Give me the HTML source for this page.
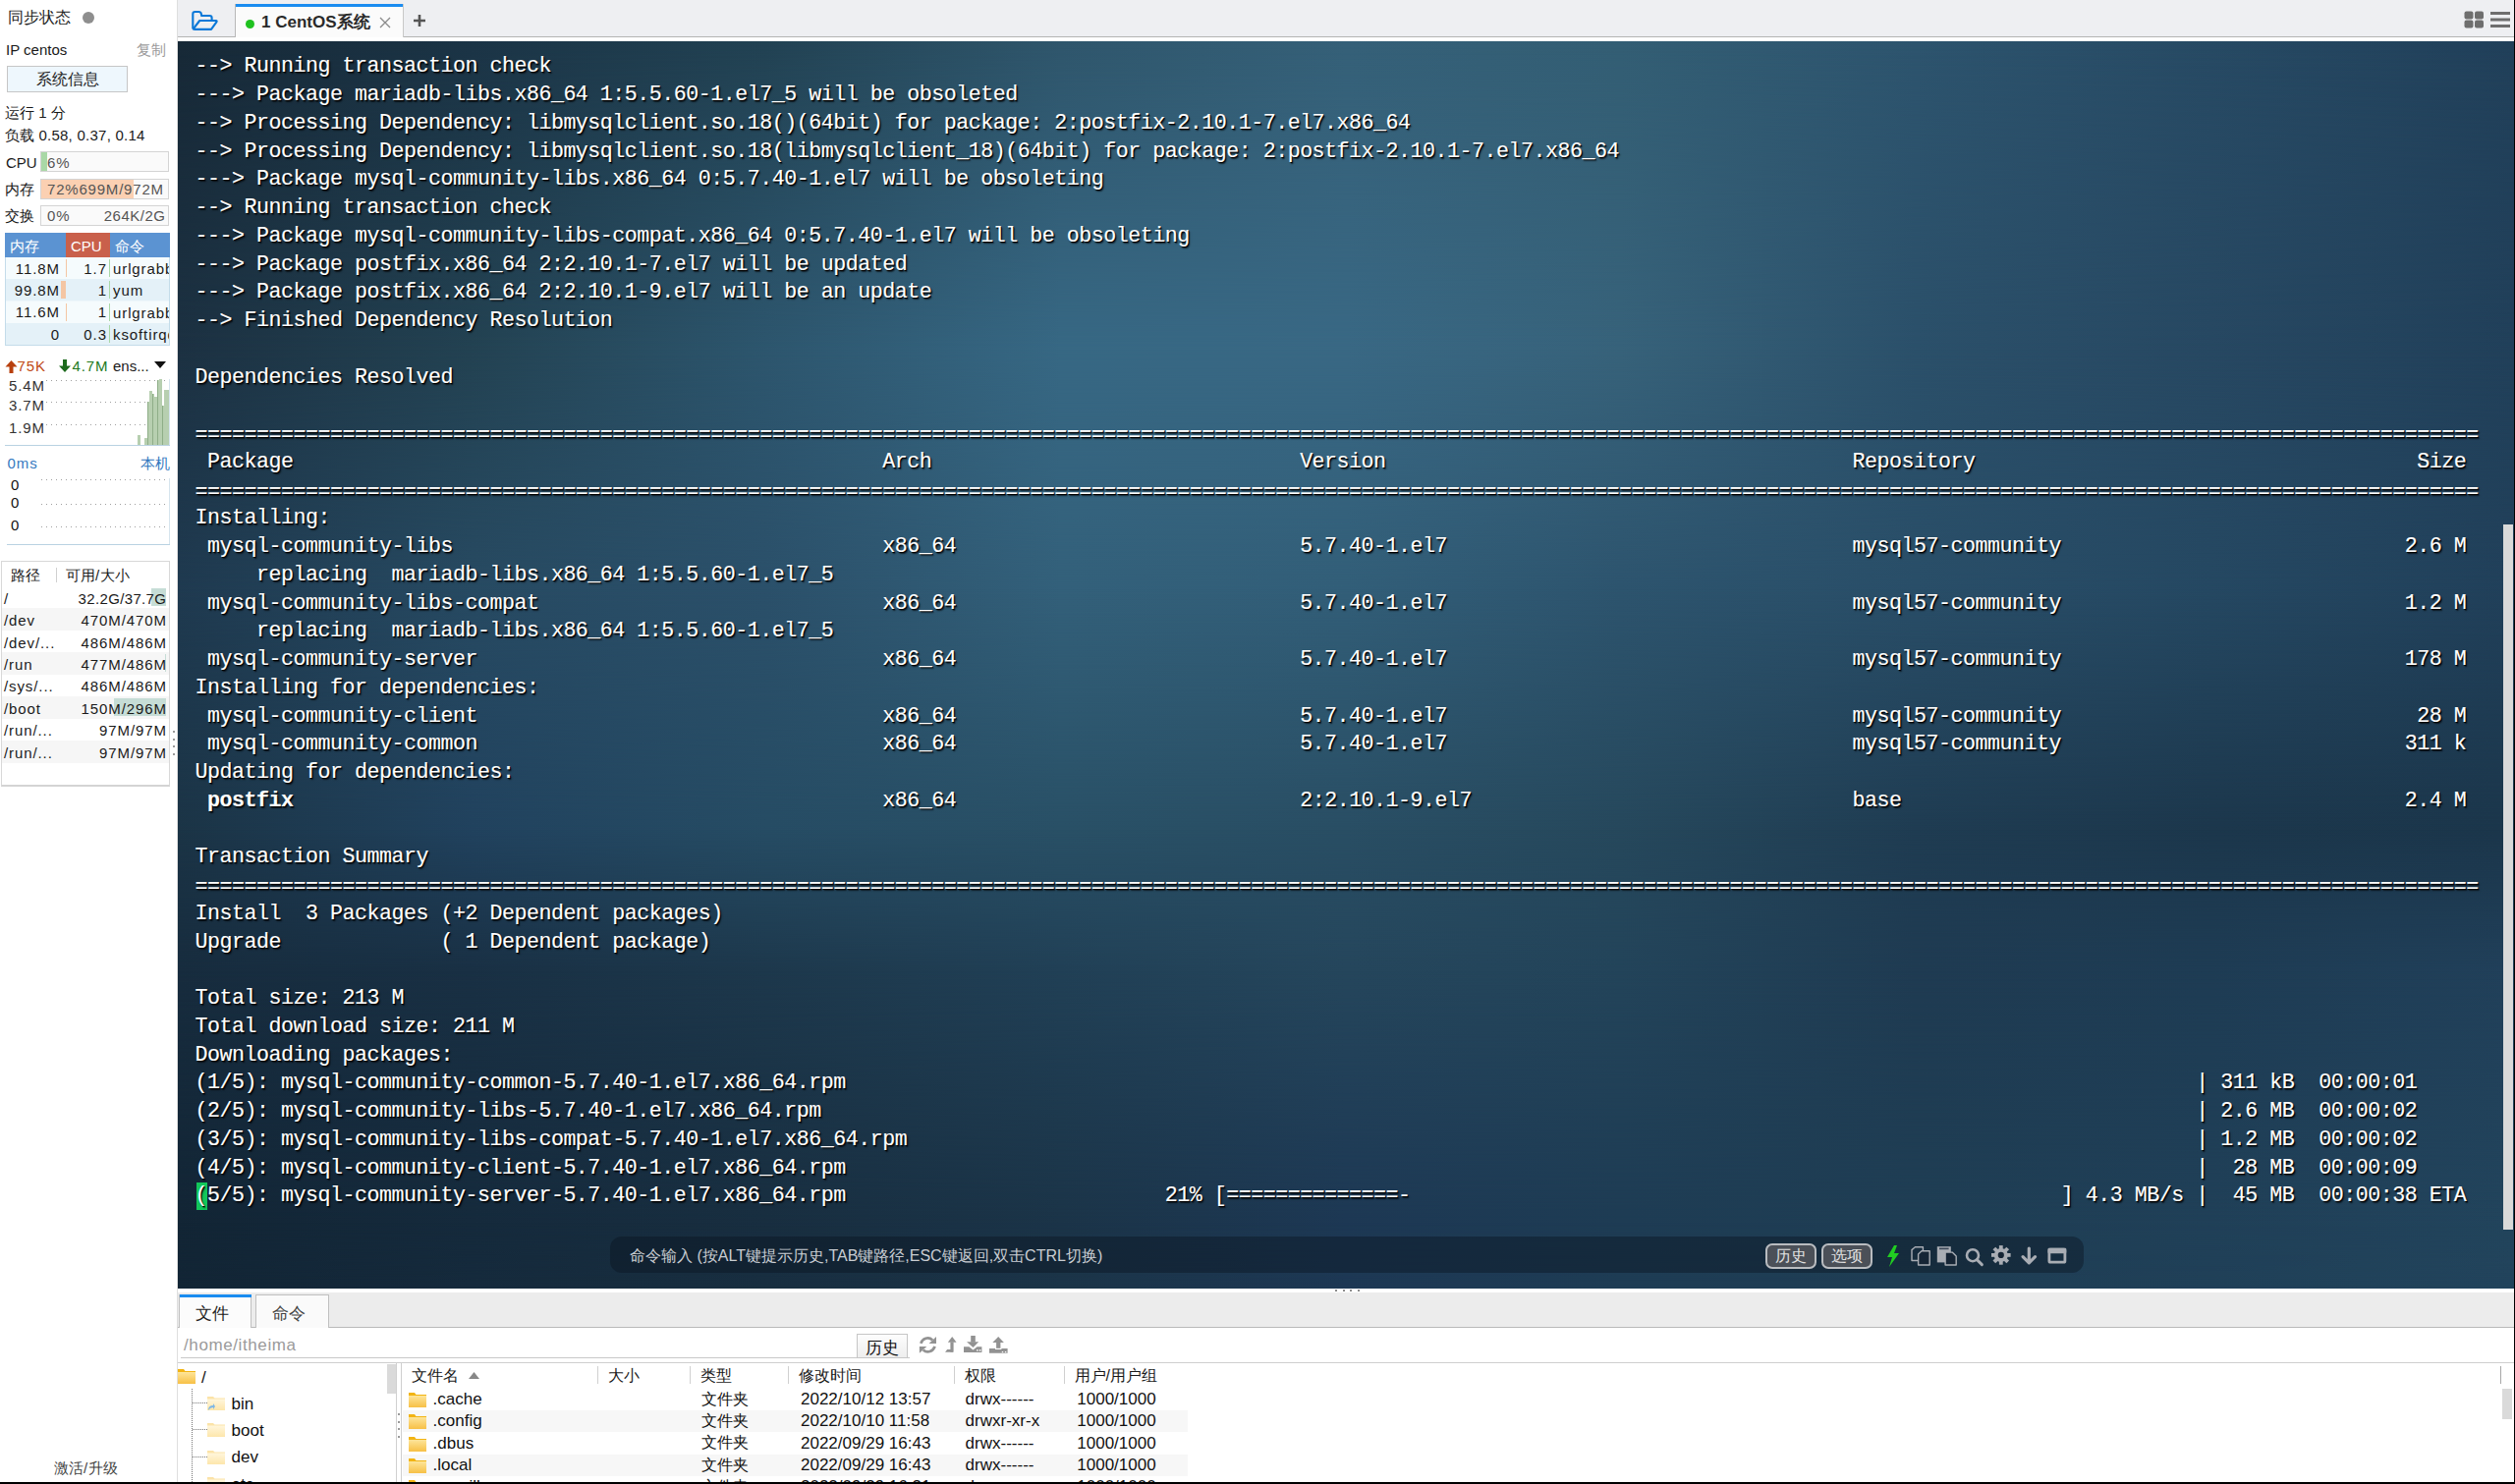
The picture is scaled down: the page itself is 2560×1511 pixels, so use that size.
<!DOCTYPE html>
<html><head><meta charset="utf-8">
<style>
*{margin:0;padding:0;box-sizing:border-box}
html,body{width:2560px;height:1511px;overflow:hidden;background:#fff;position:relative;font-family:"Liberation Sans",sans-serif;color:#1a1a1a}
.a{position:absolute}
.t{white-space:pre}
.cj{display:inline-block;width:1em;text-align:center;letter-spacing:0!important}
.sb .t{letter-spacing:.9px}
.sb .t[style*="text-align:right"]{margin-right:-.9px}
.bp .t{letter-spacing:.6px}
#side{left:0;top:0;width:180px;height:1511px;background:#fff}
#tabbar{left:181px;top:0;width:2378px;height:38px;background:#eeeff2;border-bottom:1px solid #b4b4b4}
#gap1{left:181px;top:38px;width:2378px;height:4px;background:#fff}
#term{left:181px;top:42px;width:2378px;height:1270px;overflow:hidden;background:#1e3040}
#term pre{position:absolute;left:17.5px;top:12.3px;font-family:"Liberation Mono",monospace;font-size:21.67px;letter-spacing:-0.5px;line-height:28.75px;color:#fff;-webkit-text-stroke:0.15px #fff;
 text-shadow:1px 1px 0 #000,1.5px 1.5px 1.5px rgba(0,0,0,.7);white-space:pre}
#term pre b{font-weight:bold}
.cur{background:#11c45a}
#bot{left:181px;top:1312px;width:2378px;height:197px;background:#fff}
#rb{left:2559px;top:0;width:1px;height:1511px;background:#000}
#bb{left:0;top:1509px;width:2560px;height:2px;background:#000}
</style></head><body>
<div id="side" class="a"></div>
<div class="a" style="left:180px;top:0;width:1px;height:1511px;background:#dedede"></div>
<div class="sb"><div class="a t" style="left:8px;top:10.46px;font-size:16px;line-height:16px;color:#222;"><span class="cj">同</span><span class="cj">步</span><span class="cj">状</span><span class="cj">态</span></div>
<div class="a" style="left:84px;top:12px;width:12px;height:12px;background:#8e8e8e;border-radius:50%"></div>
<div class="a t" style="left:6px;top:42.90px;font-size:15px;line-height:15px;color:#1a1a1a;letter-spacing:0">IP centos</div>
<div class="a t" style="left:139px;top:43.30px;font-size:15px;line-height:15px;color:#9c9c9c;"><span class="cj">复</span><span class="cj">制</span></div>
<div class="a" style="left:7px;top:67px;width:123px;height:27px;background:#eef7fd;border:1px solid #c6c6c6"></div>
<div class="a t" style="left:7px;width:123px;top:73.46px;font-size:16px;line-height:16px;color:#222;text-align:center;"><span class="cj">系</span><span class="cj">统</span><span class="cj">信</span><span class="cj">息</span></div>
<div class="a t" style="left:5px;top:107.30px;font-size:15px;line-height:15px;color:#1a1a1a;letter-spacing:0"><span class="cj">运</span><span class="cj">行</span> 1 <span class="cj">分</span></div>
<div class="a t" style="left:5px;top:130.30px;font-size:15px;line-height:15px;color:#1a1a1a;letter-spacing:.25px"><span class="cj">负</span><span class="cj">载</span> 0.58, 0.37, 0.14</div>
<div class="a t" style="left:6px;top:157.80px;font-size:15px;line-height:15px;color:#1a1a1a;letter-spacing:0">CPU</div>
<div class="a" style="left:41px;top:154px;width:131px;height:21px;background:#fafafa;border:1px solid #d4d4d4"></div>
<div class="a" style="left:42px;top:155px;width:6px;height:19px;background:#a9d8a6;"></div>
<div class="a t" style="left:48px;top:157.80px;font-size:15px;line-height:15px;color:#555;">6%</div>
<div class="a t" style="left:5px;top:184.80px;font-size:15px;line-height:15px;color:#1a1a1a;"><span class="cj">内</span><span class="cj">存</span></div>
<div class="a" style="left:41px;top:182px;width:131px;height:21px;background:#fafafa;border:1px solid #d4d4d4"></div>
<div class="a" style="left:42px;top:183px;width:94px;height:19px;background:#fbd0b2;"></div>
<div class="a t" style="left:48px;top:185.30px;font-size:15px;line-height:15px;color:#555;letter-spacing:.8px">72%699M/972M</div>
<div class="a t" style="left:5px;top:211.80px;font-size:15px;line-height:15px;color:#1a1a1a;"><span class="cj">交</span><span class="cj">换</span></div>
<div class="a" style="left:41px;top:209px;width:131px;height:21px;background:#fafafa;border:1px solid #d4d4d4"></div>
<div class="a t" style="left:48px;top:212.30px;font-size:15px;line-height:15px;color:#555;">0%</div>
<div class="a t" style="right:2392px;top:212.30px;font-size:15px;line-height:15px;color:#555;text-align:right;letter-spacing:.5px;margin-right:-.5px">264K/2G</div>
<div class="a" style="left:5px;top:237px;width:168px;height:115px;background:#eef6fa;border:1px solid #c4dcea;border-top:none"></div>
<div class="a" style="left:5px;top:237px;width:168px;height:25px;background:#5b93d2;"></div>
<div class="a" style="left:67px;top:237px;width:45px;height:25px;background:#c9604b;"></div>
<div class="a t" style="left:10px;top:243.30px;font-size:15px;line-height:15px;color:#fff;"><span class="cj">内</span><span class="cj">存</span></div>
<div class="a t" style="left:72px;top:243.30px;font-size:15px;line-height:15px;color:#fff;letter-spacing:0">CPU</div>
<div class="a t" style="left:117px;top:243.30px;font-size:15px;line-height:15px;color:#fff;"><span class="cj">命</span><span class="cj">令</span></div>
<div class="a" style="left:6px;top:262px;width:166px;height:22px;background:#f5fbfd;"></div>
<div class="a t" style="right:2500px;top:265.80px;font-size:15px;line-height:15px;color:#1a1a1a;text-align:right;">11.8M</div>
<div class="a" style="left:66.5px;top:264px;width:0.5px;height:18px;background:#f4c6a4;"></div>
<div class="a" style="left:111px;top:264px;width:1px;height:18px;background:#a8d8a6;"></div>
<div class="a t" style="right:2452px;top:265.80px;font-size:15px;line-height:15px;color:#1a1a1a;text-align:right;">1.7</div>
<div class="a" style="left:115px;top:262px;width:57px;height:22px;overflow:hidden"><div class="a t" style="left:0px;top:3.80px;font-size:15px;line-height:15px;color:#1a1a1a;">urlgrabber</div></div>
<div class="a" style="left:6px;top:284px;width:166px;height:22px;background:#e4f1f8;"></div>
<div class="a t" style="right:2500px;top:288.10px;font-size:15px;line-height:15px;color:#1a1a1a;text-align:right;">99.8M</div>
<div class="a" style="left:62px;top:286px;width:5px;height:18px;background:#f4c6a4;"></div>
<div class="a" style="left:111px;top:286px;width:1px;height:18px;background:#a8d8a6;"></div>
<div class="a t" style="right:2452px;top:288.10px;font-size:15px;line-height:15px;color:#1a1a1a;text-align:right;">1</div>
<div class="a" style="left:115px;top:284px;width:57px;height:22px;overflow:hidden"><div class="a t" style="left:0px;top:3.80px;font-size:15px;line-height:15px;color:#1a1a1a;">yum</div></div>
<div class="a" style="left:6px;top:307px;width:166px;height:22px;background:#f5fbfd;"></div>
<div class="a t" style="right:2500px;top:310.40px;font-size:15px;line-height:15px;color:#1a1a1a;text-align:right;">11.6M</div>
<div class="a" style="left:66.5px;top:309px;width:0.5px;height:18px;background:#f4c6a4;"></div>
<div class="a" style="left:111px;top:309px;width:1px;height:18px;background:#a8d8a6;"></div>
<div class="a t" style="right:2452px;top:310.40px;font-size:15px;line-height:15px;color:#1a1a1a;text-align:right;">1</div>
<div class="a" style="left:115px;top:307px;width:57px;height:22px;overflow:hidden"><div class="a t" style="left:0px;top:3.80px;font-size:15px;line-height:15px;color:#1a1a1a;">urlgrabber</div></div>
<div class="a" style="left:6px;top:329px;width:166px;height:22px;background:#e4f1f8;"></div>
<div class="a t" style="right:2500px;top:332.70px;font-size:15px;line-height:15px;color:#1a1a1a;text-align:right;">0</div>
<div class="a" style="left:111px;top:331px;width:1px;height:18px;background:#a8d8a6;"></div>
<div class="a t" style="right:2452px;top:332.70px;font-size:15px;line-height:15px;color:#1a1a1a;text-align:right;">0.3</div>
<div class="a" style="left:115px;top:329px;width:57px;height:22px;overflow:hidden"><div class="a t" style="left:0px;top:3.80px;font-size:15px;line-height:15px;color:#1a1a1a;">ksoftirqd</div></div>
<svg class="a" style="left:5px;top:367px" width="13" height="13" viewBox="0 0 13 13"><path d="M6.5 0 L12.5 6.5 L8.5 6.5 L8.5 13 L4.5 13 L4.5 6.5 L0.5 6.5 Z" fill="#b8400e"/></svg>
<div class="a t" style="left:17.5px;top:365.30px;font-size:15px;line-height:15px;color:#c04a14;">75K</div>
<svg class="a" style="left:60px;top:366px" width="12" height="13" viewBox="0 0 12 13"><path d="M6 13 L12 6.5 L8 6.5 L8 0 L4 0 L4 6.5 L0 6.5 Z" fill="#1d6a1d"/></svg>
<div class="a t" style="left:73.5px;top:365.30px;font-size:15px;line-height:15px;color:#237a23;">4.7M</div>
<div class="a t" style="left:115px;top:365.30px;font-size:15px;line-height:15px;color:#1a1a1a;letter-spacing:0">ens...</div>
<svg class="a" style="left:157px;top:368px" width="12" height="8" viewBox="0 0 12 8"><path d="M0 0 L12 0 L6 7 Z" fill="#111"/></svg>
<div class="a" style="left:5px;top:453px;width:168px;height:1px;background:#b9d2e2;"></div>
<div class="a" style="left:172px;top:386px;width:1px;height:67px;background:#d6e4ee;"></div>
<div class="a" style="left:47px;top:387px;width:125px;height:1px;background:repeating-linear-gradient(90deg,#a0a0a0 0 1px,transparent 1px 5px);"></div>
<div class="a" style="left:47px;top:409px;width:125px;height:1px;background:repeating-linear-gradient(90deg,#a0a0a0 0 1px,transparent 1px 5px);"></div>
<div class="a" style="left:47px;top:432px;width:125px;height:1px;background:repeating-linear-gradient(90deg,#a0a0a0 0 1px,transparent 1px 5px);"></div>
<div class="a t" style="left:9px;top:385.30px;font-size:15px;line-height:15px;color:#333;">5.4M</div>
<div class="a t" style="left:9px;top:405.30px;font-size:15px;line-height:15px;color:#333;">3.7M</div>
<div class="a t" style="left:9px;top:427.90px;font-size:15px;line-height:15px;color:#333;">1.9M</div>
<svg class="a" style="left:138px;top:380px" width="36" height="74"><rect x="2" y="63" width="3" height="10" fill="#b7cfb0"/><rect x="9" y="66" width="3" height="7" fill="#b7cfb0"/><rect x="12" y="29" width="2" height="44" fill="#b7cfb0"/><rect x="14" y="18" width="3" height="55" fill="#b7cfb0"/><rect x="17" y="21" width="2" height="52" fill="#b7cfb0"/><rect x="19" y="24" width="3" height="49" fill="#b7cfb0"/><rect x="22" y="7" width="2" height="66" fill="#b7cfb0"/><rect x="24" y="6" width="3" height="67" fill="#b7cfb0"/><rect x="27" y="33" width="2" height="40" fill="#b7cfb0"/><rect x="29" y="17" width="5" height="56" fill="#b7cfb0"/><rect x="12" y="29" width="1" height="44" fill="#8fae88"/><rect x="17" y="21" width="1" height="52" fill="#8fae88"/><rect x="22" y="7" width="1" height="66" fill="#8fae88"/><rect x="27" y="33" width="1" height="40" fill="#8fae88"/></svg>
<div class="a t" style="left:7.5px;top:464.30px;font-size:15px;line-height:15px;color:#3579c0;">0ms</div>
<div class="a t" style="right:2388px;top:464.30px;font-size:15px;line-height:15px;color:#3579c0;text-align:right;"><span class="cj">本</span><span class="cj">机</span></div>
<div class="a" style="left:7px;top:554px;width:166px;height:1px;background:#b9d2e2;"></div>
<div class="a" style="left:172px;top:487px;width:1px;height:67px;background:#d6e4ee;"></div>
<div class="a" style="left:42px;top:488px;width:128px;height:1px;background:repeating-linear-gradient(90deg,#a0a0a0 0 1px,transparent 1px 5px);"></div>
<div class="a" style="left:42px;top:513px;width:128px;height:1px;background:repeating-linear-gradient(90deg,#a0a0a0 0 1px,transparent 1px 5px);"></div>
<div class="a" style="left:42px;top:536px;width:128px;height:1px;background:repeating-linear-gradient(90deg,#a0a0a0 0 1px,transparent 1px 5px);"></div>
<div class="a t" style="left:11px;top:485.90px;font-size:15px;line-height:15px;color:#111;">0</div>
<div class="a t" style="left:11px;top:504.30px;font-size:15px;line-height:15px;color:#111;">0</div>
<div class="a t" style="left:11px;top:527.30px;font-size:15px;line-height:15px;color:#111;">0</div>
<div class="a" style="left:1px;top:571px;width:172px;height:230px;background:#fff;border:1px solid #d8d8d8;border-bottom:2px solid #d4d4d4"></div>
<div class="a t" style="left:10.7px;top:578.30px;font-size:15px;line-height:15px;color:#1a1a1a;"><span class="cj">路</span><span class="cj">径</span></div>
<div class="a" style="left:57px;top:578px;width:1px;height:15px;background:#d0d0d0;"></div>
<div class="a t" style="left:67px;top:578.30px;font-size:15px;line-height:15px;color:#1a1a1a;"><span class="cj">可</span><span class="cj">用</span>/<span class="cj">大</span><span class="cj">小</span></div>
<div class="a" style="left:154px;top:599px;width:15px;height:18px;background:#c6ddd6;"></div>
<div class="a t" style="left:4px;top:601.70px;font-size:15px;line-height:15px;color:#1a1a1a;">/</div>
<div class="a t" style="right:2391px;top:601.70px;font-size:15px;line-height:15px;color:#1a1a1a;text-align:right;letter-spacing:.36px;margin-right:-.36px">32.2G/37.7G</div>
<div class="a" style="left:2px;top:619px;width:170px;height:23px;background:#f6f6f6;"></div>
<div class="a t" style="left:4px;top:624.10px;font-size:15px;line-height:15px;color:#1a1a1a;">/dev</div>
<div class="a t" style="right:2391px;top:624.10px;font-size:15px;line-height:15px;color:#1a1a1a;text-align:right;">470M/470M</div>
<div class="a t" style="left:4px;top:646.50px;font-size:15px;line-height:15px;color:#1a1a1a;">/dev/...</div>
<div class="a t" style="right:2391px;top:646.50px;font-size:15px;line-height:15px;color:#1a1a1a;text-align:right;">486M/486M</div>
<div class="a" style="left:2px;top:664px;width:170px;height:23px;background:#f6f6f6;"></div>
<div class="a" style="left:168px;top:666px;width:1px;height:18px;background:#c6ddd6;"></div>
<div class="a t" style="left:4px;top:668.90px;font-size:15px;line-height:15px;color:#1a1a1a;">/run</div>
<div class="a t" style="right:2391px;top:668.90px;font-size:15px;line-height:15px;color:#1a1a1a;text-align:right;">477M/486M</div>
<div class="a t" style="left:4px;top:691.30px;font-size:15px;line-height:15px;color:#1a1a1a;">/sys/...</div>
<div class="a t" style="right:2391px;top:691.30px;font-size:15px;line-height:15px;color:#1a1a1a;text-align:right;">486M/486M</div>
<div class="a" style="left:2px;top:709px;width:170px;height:23px;background:#f6f6f6;"></div>
<div class="a" style="left:115.6px;top:711px;width:53.400000000000006px;height:18px;background:#c6ddd6;"></div>
<div class="a t" style="left:4px;top:713.70px;font-size:15px;line-height:15px;color:#1a1a1a;">/boot</div>
<div class="a t" style="right:2391px;top:713.70px;font-size:15px;line-height:15px;color:#1a1a1a;text-align:right;">150M/296M</div>
<div class="a t" style="left:4px;top:736.10px;font-size:15px;line-height:15px;color:#1a1a1a;">/run/...</div>
<div class="a t" style="right:2391px;top:736.10px;font-size:15px;line-height:15px;color:#1a1a1a;text-align:right;">97M/97M</div>
<div class="a" style="left:2px;top:754px;width:170px;height:23px;background:#f6f6f6;"></div>
<div class="a t" style="left:4px;top:758.50px;font-size:15px;line-height:15px;color:#1a1a1a;">/run/...</div>
<div class="a t" style="right:2391px;top:758.50px;font-size:15px;line-height:15px;color:#1a1a1a;text-align:right;">97M/97M</div>
<div class="a" style="left:176px;top:744px;width:2px;height:2px;background:#9a9a9a;"></div>
<div class="a" style="left:176px;top:752px;width:2px;height:2px;background:#9a9a9a;"></div>
<div class="a" style="left:176px;top:759px;width:2px;height:2px;background:#9a9a9a;"></div>
<div class="a" style="left:176px;top:767px;width:2px;height:2px;background:#9a9a9a;"></div>
<div class="a t" style="left:55px;top:1487.30px;font-size:15px;line-height:15px;color:#444;"><span class="cj">激</span><span class="cj">活</span>/<span class="cj">升</span><span class="cj">级</span></div></div>
<div id="tabbar" class="a"></div>
<div id="gap1" class="a"></div>
<svg class="a" style="left:186px;top:4px" width="50" height="32" viewBox="0 0 50 32"><path d="M10.3 25 V10.2 Q10.3 8 12.5 8 H16.3 Q18.4 8 18.8 10 L19.2 12 H27.5 Q29.6 12 29.6 14.2 V17" fill="none" stroke="#0a78d8" stroke-width="2.1" stroke-linejoin="round"/><path d="M10.6 25.6 L17.2 17 H33.8 Q35.2 17 34.4 18.3 L29 25.9 H12.2 Q10.6 25.9 10.6 25.6 Z" fill="none" stroke="#0a78d8" stroke-width="2.1" stroke-linejoin="round"/></svg>
<div class="a" style="left:239px;top:4px;width:172px;height:34px;background:#fbfbfb;border-left:1px solid #b8b8b8;border-right:1px solid #c8c8c8"></div>
<div class="a" style="left:240px;top:4px;width:170px;height:3px;background:#1a8cf0;"></div>
<div class="a" style="left:250px;top:20px;width:9px;height:9px;background:#1fc21f;border-radius:50%"></div>
<div class="a t" style="left:266px;top:13.81px;font-size:17px;line-height:17px;color:#2a2a2a;font-weight:bold;">1 CentOS<span class="cj">系</span><span class="cj">统</span></div>
<svg class="a" style="left:386px;top:17px" width="12" height="12" viewBox="0 0 12 12"><path d="M1 1 L11 11 M11 1 L1 11" stroke="#8a8a8a" stroke-width="1.3"/></svg>
<svg class="a" style="left:420px;top:14px" width="14" height="14" viewBox="0 0 14 14"><path d="M7 1 V13 M1 7 H13" stroke="#555" stroke-width="2.6"/></svg>
<svg class="a" style="left:2508px;top:11px" width="21" height="18" viewBox="0 0 21 18"><rect x="0.5" y="0.5" width="9" height="8" rx="2" fill="#6e6e6e"/><rect x="11" y="0.5" width="9" height="8" rx="2" fill="#6e6e6e"/><rect x="0.5" y="9.5" width="9" height="8" rx="2" fill="#6e6e6e"/><rect x="11" y="9.5" width="9" height="8" rx="2" fill="#6e6e6e"/></svg>
<svg class="a" style="left:2535px;top:12px" width="20" height="16" viewBox="0 0 20 16"><rect x="0" y="0" width="20" height="3" fill="#6e6e6e"/><rect x="0" y="6.5" width="20" height="3" fill="#6e6e6e"/><rect x="0" y="13" width="20" height="3" fill="#6e6e6e"/></svg>
<div id="term" class="a"><div class="a" style="left:0;top:0;width:2378px;height:1270px;background:linear-gradient(90deg,#172937 0px,#1b3446 299px,#224253 599px,#2f566c 899px,#356078 1189px,#335e74 1469px,#2d546e 1769px,#274a64 2069px,#21405a 2378px)"></div>
<div class="a" style="left:0;top:0px;width:2378px;height:1270px;background:linear-gradient(90deg,#1c3142 0px,#234252 299px,#2d566e 599px,#376884 899px,#396884 1189px,#37627a 1469px,#2b506a 1769px,#274862 2069px,#21405a 2378px);-webkit-mask-image:linear-gradient(to bottom,transparent 0px,#000 314px);mask-image:linear-gradient(to bottom,transparent 0px,#000 314px)"></div>
<div class="a" style="left:0;top:314px;width:2378px;height:956px;background:linear-gradient(90deg,#1f3a50 0px,#274a62 299px,#2b506a 599px,#33607a 899px,#325e78 1189px,#2d546e 1469px,#294e68 1769px,#254862 2069px,#21405a 2378px);-webkit-mask-image:linear-gradient(to bottom,transparent 0px,#000 244px);mask-image:linear-gradient(to bottom,transparent 0px,#000 244px)"></div>
<div class="a" style="left:0;top:558px;width:2378px;height:712px;background:linear-gradient(90deg,#1b3446 0px,#21425e 299px,#264c64 599px,#295066 899px,#294e64 1189px,#26485c 1469px,#1f3c52 1769px,#1c374c 2069px,#1b364b 2378px);-webkit-mask-image:linear-gradient(to bottom,transparent 0px,#000 245px);mask-image:linear-gradient(to bottom,transparent 0px,#000 245px)"></div>
<div class="a" style="left:0;top:803px;width:2378px;height:467px;background:linear-gradient(90deg,#172c3e 0px,#193044 299px,#1d384c 599px,#214056 899px,#25465c 1189px,#23445a 1469px,#1f3b52 1769px,#1e3c54 2069px,#21405a 2378px);-webkit-mask-image:linear-gradient(to bottom,transparent 0px,#000 143px);mask-image:linear-gradient(to bottom,transparent 0px,#000 143px)"></div>
<div class="a" style="left:0;top:946px;width:2378px;height:324px;background:linear-gradient(90deg,#122535 0px,#152a3c 299px,#182e40 599px,#1b3448 899px,#1d3854 1189px,#1e3c54 1469px,#1f3e54 1769px,#204058 2069px,#22445c 2378px);-webkit-mask-image:linear-gradient(to bottom,transparent 0px,#000 257px);mask-image:linear-gradient(to bottom,transparent 0px,#000 257px)"></div>
<div class="a" style="left:0;top:1203px;width:2378px;height:67px;background:linear-gradient(90deg,#122535 0px,#152a3c 299px,#182e40 599px,#1b3448 899px,#1d3854 1189px,#1e3c54 1469px,#1f3e54 1769px,#204058 2069px,#22445c 2378px);-webkit-mask-image:linear-gradient(to bottom,transparent 0px,#000 67px);mask-image:linear-gradient(to bottom,transparent 0px,#000 67px)"></div><div class="a" style="left:19px;top:1162px;width:11px;height:28px;background:#12c65a"></div><pre>--&gt; Running transaction check
---&gt; Package mariadb-libs.x86_64 1:5.5.60-1.el7_5 will be obsoleted
--&gt; Processing Dependency: libmysqlclient.so.18()(64bit) for package: 2:postfix-2.10.1-7.el7.x86_64
--&gt; Processing Dependency: libmysqlclient.so.18(libmysqlclient_18)(64bit) for package: 2:postfix-2.10.1-7.el7.x86_64
---&gt; Package mysql-community-libs.x86_64 0:5.7.40-1.el7 will be obsoleting
--&gt; Running transaction check
---&gt; Package mysql-community-libs-compat.x86_64 0:5.7.40-1.el7 will be obsoleting
---&gt; Package postfix.x86_64 2:2.10.1-7.el7 will be updated
---&gt; Package postfix.x86_64 2:2.10.1-9.el7 will be an update
--&gt; Finished Dependency Resolution

Dependencies Resolved

<span style="position:relative;top:2.4px">==========================================================================================================================================================================================</span>
 Package                                                Arch                              Version                                      Repository                                    Size
<span style="position:relative;top:2.4px">==========================================================================================================================================================================================</span>
Installing:
 mysql-community-libs                                   x86_64                            5.7.40-1.el7                                 mysql57-community                            2.6 M
     replacing  mariadb-libs.x86_64 1:5.5.60-1.el7_5
 mysql-community-libs-compat                            x86_64                            5.7.40-1.el7                                 mysql57-community                            1.2 M
     replacing  mariadb-libs.x86_64 1:5.5.60-1.el7_5
 mysql-community-server                                 x86_64                            5.7.40-1.el7                                 mysql57-community                            178 M
Installing for dependencies:
 mysql-community-client                                 x86_64                            5.7.40-1.el7                                 mysql57-community                             28 M
 mysql-community-common                                 x86_64                            5.7.40-1.el7                                 mysql57-community                            311 k
Updating for dependencies:
 <b>postfix</b>                                                x86_64                            2:2.10.1-9.el7                               base                                         2.4 M

Transaction Summary
<span style="position:relative;top:2.4px">==========================================================================================================================================================================================</span>
Install  3 Packages (+2 Dependent packages)
Upgrade             ( 1 Dependent package)

Total size: 213 M
Total download size: 211 M
Downloading packages:
(1/5): mysql-community-common-5.7.40-1.el7.x86_64.rpm                                                                                                              | 311 kB  00:00:01
(2/5): mysql-community-libs-5.7.40-1.el7.x86_64.rpm                                                                                                                | 2.6 MB  00:00:02
(3/5): mysql-community-libs-compat-5.7.40-1.el7.x86_64.rpm                                                                                                         | 1.2 MB  00:00:02
(4/5): mysql-community-client-5.7.40-1.el7.x86_64.rpm                                                                                                              |  28 MB  00:00:09
(5/5): mysql-community-server-5.7.40-1.el7.x86_64.rpm                          21% [==============-                                                     ] 4.3 MB/s |  45 MB  00:00:38 ETA</pre></div>
<div class="a" style="left:621px;top:1259px;width:1500px;height:37px;background:rgba(10,20,30,0.42);border-radius:12px"></div>
<div class="a t" style="left:641px;top:1271.46px;font-size:16px;line-height:16px;color:#c9cdd2;"><span class="cj">命</span><span class="cj">令</span><span class="cj">输</span><span class="cj">入</span> (<span class="cj">按</span>ALT<span class="cj">键</span><span class="cj">提</span><span class="cj">示</span><span class="cj">历</span><span class="cj">史</span>,TAB<span class="cj">键</span><span class="cj">路</span><span class="cj">径</span>,ESC<span class="cj">键</span><span class="cj">返</span><span class="cj">回</span>,<span class="cj">双</span><span class="cj">击</span>CTRL<span class="cj">切</span><span class="cj">换</span>)</div>
<div class="a" style="left:1797px;top:1266px;width:52px;height:26px;background:#4b5058;border:2px solid #b9bcc0;border-radius:7px"></div>
<div class="a t" style="left:1797px;width:52px;top:1271.46px;font-size:16px;line-height:16px;color:#e0e0e0;text-align:center;"><span class="cj">历</span><span class="cj">史</span></div>
<div class="a" style="left:1854px;top:1266px;width:52px;height:26px;background:#4b5058;border:2px solid #b9bcc0;border-radius:7px"></div>
<div class="a t" style="left:1854px;width:52px;top:1271.46px;font-size:16px;line-height:16px;color:#e0e0e0;text-align:center;"><span class="cj">选</span><span class="cj">项</span></div>
<svg class="a" style="left:1920px;top:1268px" width="14" height="22" viewBox="0 0 14 22"><path d="M8 0 L1 12 L6 12 L3 22 L13 8 L8 8 L11 0 Z" fill="#22cc22"/></svg>
<svg class="a" style="left:1925px;top:1262px" width="190" height="34" viewBox="0 0 190 34"><path d="M21 21.5 V10.6 L24.4 7.8 H32.4 V21.5 Z" fill="none" stroke="#a9adb4" stroke-width="1.4" stroke-linejoin="round"/><path d="M27.6 26 V14.9 L31 11.8 H39.2 V26 Z" fill="#162535" stroke="#a9adb4" stroke-width="1.4" stroke-linejoin="round"/><rect x="46.8" y="7.2" width="14" height="16.2" fill="#a9adb4"/><rect x="49" y="8.6" width="9.6" height="1.6" fill="#3a4656"/><path d="M55.1 26 V13.1 H62.2 L66.2 17.1 V26 Z" fill="#162535" stroke="#a9adb4" stroke-width="1.4" stroke-linejoin="round"/><circle cx="83" cy="16.2" r="6" fill="none" stroke="#a9adb4" stroke-width="2.6"/><path d="M87.4 20.6 L92.4 25.6" stroke="#a9adb4" stroke-width="2.9" stroke-linecap="round"/><g fill="#a9adb4"><circle cx="111.8" cy="15.9" r="7"/><rect x="109.9" y="6.1" width="3.8" height="19.6" transform="rotate(0 111.8 15.9)"/><rect x="109.9" y="6.1" width="3.8" height="19.6" transform="rotate(45 111.8 15.9)"/><rect x="109.9" y="6.1" width="3.8" height="19.6" transform="rotate(90 111.8 15.9)"/><rect x="109.9" y="6.1" width="3.8" height="19.6" transform="rotate(135 111.8 15.9)"/></g><circle cx="111.8" cy="15.9" r="3.1" fill="#162535"/><path d="M140.3 9 V23.5 M134.1 17.6 L140.3 23.8 L146.5 17.6" fill="none" stroke="#a9adb4" stroke-width="3.2" stroke-linecap="round" stroke-linejoin="round"/><rect x="160.9" y="10.2" width="16" height="13" rx="1.2" fill="none" stroke="#a9adb4" stroke-width="2.8"/><rect x="159.5" y="8.8" width="18.8" height="5.4" rx="1.2" fill="#a9adb4"/></svg>
<div class="a" style="left:2548px;top:534px;width:10px;height:718px;background:#d9d9d9"></div>
<div class="a" style="left:181px;top:1312px;width:2378px;height:4px;background:#fff;"></div>
<div class="a" style="left:1359px;top:1312.5px;width:2px;height:2px;background:#8c8c8c;"></div>
<div class="a" style="left:1366.5px;top:1312.5px;width:2px;height:2px;background:#8c8c8c;"></div>
<div class="a" style="left:1374px;top:1312.5px;width:2px;height:2px;background:#8c8c8c;"></div>
<div class="a" style="left:1381.5px;top:1312.5px;width:2px;height:2px;background:#8c8c8c;"></div>
<div class="a" style="left:181px;top:1316px;width:2378px;height:36px;background:#ececec;border-bottom:1px solid #b9b9b9"></div>
<div class="a" style="left:182px;top:1318px;width:74px;height:34px;background:#fcfcfc;border-left:1px solid #c0c0c0;border-right:1px solid #c0c0c0"></div>
<div class="a" style="left:183px;top:1318px;width:73px;height:3px;background:#1a8cf0;"></div>
<div class="a t" style="left:179px;width:74px;top:1328.61px;font-size:17px;line-height:17px;color:#222;text-align:center;"><span class="cj">文</span><span class="cj">件</span></div>
<div class="a" style="left:260px;top:1318px;width:75px;height:34px;background:#fafafa;border:1px solid #c0c0c0;border-bottom:none"></div>
<div class="a t" style="left:256px;width:75px;top:1328.61px;font-size:17px;line-height:17px;color:#444;text-align:center;"><span class="cj">命</span><span class="cj">令</span></div>
<div class="a t" style="left:187px;top:1361.01px;font-size:17px;line-height:17px;color:#9a9a9a;letter-spacing:.6px">/home/itheima</div>
<div class="a" style="left:184px;top:1382px;width:742px;height:1px;background:#c8c8c8;"></div>
<div class="a" style="left:872px;top:1358px;width:52px;height:25px;background:linear-gradient(#fdfdfd,#eeeeee);border:1px solid #c6c6c6"></div>
<div class="a t" style="left:872px;width:52px;top:1363.61px;font-size:17px;line-height:17px;color:#111;text-align:center;"><span class="cj">历</span><span class="cj">史</span></div>
<svg class="a" style="left:925px;top:1355px" width="110" height="30" viewBox="0 0 110 30"><path d="M12.4 12.8 A7.2 7.2 0 0 1 24.2 9.4" fill="none" stroke="#929292" stroke-width="2.7"/><path d="M20.6 13 L28 13 L28 6 Z" fill="#929292"/><path d="M26.5 15.9 A7.2 7.2 0 0 1 14.7 19.4" fill="none" stroke="#929292" stroke-width="2.7"/><path d="M18.3 15.9 L10.9 15.9 L10.9 22.7 Z" fill="#929292"/><path d="M39.8 11.8 L44.2 6.1 L48.6 11.8 Z" fill="#929292"/><rect x="42.4" y="11.5" width="3.2" height="10.2" fill="#929292"/><path d="M37 21.7 L39.2 19 H45 V21.7 Z" fill="#929292"/><rect x="63.2" y="5" width="4.6" height="6.6" fill="#929292"/><path d="M59 11.2 H71.2 L65.5 16.9 Z" fill="#929292"/><path d="M56 16.2 H61.4 L65.5 19.6 L69.6 16.2 H74.4 V21.9 H56 Z" fill="#929292"/><rect x="69.2" y="19.1" width="1.4" height="1.6" fill="#fff"/><rect x="71.9" y="19.1" width="1.4" height="1.6" fill="#fff"/><path d="M85.3 11.9 L91.2 5.9 L96.9 11.9 Z" fill="#929292"/><rect x="89.1" y="11.6" width="4.3" height="6.2" fill="#929292"/><path d="M82 17.9 H88 V19 H94.4 V17.9 H100.6 V22.7 H82 Z" fill="#929292"/><rect x="94.8" y="21" width="1.4" height="1.2" fill="#fff"/><rect x="97.9" y="21" width="1.4" height="1.2" fill="#fff"/></svg>
<div class="a" style="left:181px;top:1387px;width:2378px;height:1px;background:#cfcfcf;"></div>
<div class="a" style="left:403px;top:1387px;width:1px;height:122px;background:#d0d0d0;"></div>
<div class="a" style="left:394px;top:1389px;width:9px;height:30px;background:#dadada;"></div>
<div class="a" style="left:408px;top:1388px;width:1px;height:121px;background:#cfcfcf;"></div>
<svg width="0" height="0" style="position:absolute"><defs><linearGradient id="df" x1="0" y1="0" x2="0" y2="1"><stop offset="0" stop-color="#fde59a"/><stop offset="1" stop-color="#f7c046"/></linearGradient><linearGradient id="lf" x1="0" y1="0" x2="0" y2="1"><stop offset="0" stop-color="#fff6dc"/><stop offset="1" stop-color="#fde6ab"/></linearGradient></defs></svg>
<svg class="a" style="left:181px;top:1394px" width="18" height="15" viewBox="0 0 18 15"><path d="M0 0 H6 L7.5 2 H18 V15 H0 Z" fill="#f2b414"/><rect x="0" y="3" width="18" height="12" fill="url(#df)"/></svg>
<div class="a t" style="left:205px;top:1393.61px;font-size:17px;line-height:17px;color:#111;">/</div>
<div class="a" style="left:195px;top:1414px;width:1px;height:95px;background:none;border-left:1px dotted #777"></div>
<div class="a" style="left:196px;top:1428px;width:15px;height:1px;background:none;border-top:1px dotted #777"></div>
<svg class="a" style="left:211px;top:1421px" width="18" height="15" viewBox="0 0 18 15"><path d="M0 1 H6 L7.5 2.5 H18 V15 H0 Z" fill="#fbe3a8"/><rect x="0" y="3.5" width="18" height="11.5" fill="url(#lf)"/></svg>
<div class="a t" style="left:235.6px;top:1420.81px;font-size:17px;line-height:17px;color:#111;">bin</div>
<div class="a" style="left:196px;top:1455px;width:15px;height:1px;background:none;border-top:1px dotted #777"></div>
<svg class="a" style="left:211px;top:1448px" width="18" height="15" viewBox="0 0 18 15"><path d="M0 1 H6 L7.5 2.5 H18 V15 H0 Z" fill="#fbe3a8"/><rect x="0" y="3.5" width="18" height="11.5" fill="url(#lf)"/></svg>
<div class="a t" style="left:235.6px;top:1448.11px;font-size:17px;line-height:17px;color:#111;">boot</div>
<div class="a" style="left:196px;top:1483px;width:15px;height:1px;background:none;border-top:1px dotted #777"></div>
<svg class="a" style="left:211px;top:1476px" width="18" height="15" viewBox="0 0 18 15"><path d="M0 1 H6 L7.5 2.5 H18 V15 H0 Z" fill="#fbe3a8"/><rect x="0" y="3.5" width="18" height="11.5" fill="url(#lf)"/></svg>
<div class="a t" style="left:235.6px;top:1475.41px;font-size:17px;line-height:17px;color:#111;">dev</div>
<div class="a" style="left:196px;top:1510px;width:15px;height:1px;background:none;border-top:1px dotted #777"></div>
<svg class="a" style="left:211px;top:1503px" width="18" height="15" viewBox="0 0 18 15"><path d="M0 1 H6 L7.5 2.5 H18 V15 H0 Z" fill="#fbe3a8"/><rect x="0" y="3.5" width="18" height="11.5" fill="url(#lf)"/></svg>
<div class="a t" style="left:235.6px;top:1502.71px;font-size:17px;line-height:17px;color:#111;">etc</div>
<svg class="a" style="left:211px;top:1428px" width="8" height="9" viewBox="0 0 8 9"><path d="M1 8 Q1 3 6 3 L6 1 L8 4 L6 7 L6 5 Q3 5 1 8Z" fill="#7fb7e6"/></svg>
<div class="a" style="left:405px;top:1439px;width:2px;height:2px;background:#9a9a9a;"></div>
<div class="a" style="left:405px;top:1447px;width:2px;height:2px;background:#9a9a9a;"></div>
<div class="a" style="left:405px;top:1454px;width:2px;height:2px;background:#9a9a9a;"></div>
<div class="a" style="left:405px;top:1462px;width:2px;height:2px;background:#9a9a9a;"></div>
<div class="a t" style="left:418.8px;top:1393.46px;font-size:16px;line-height:16px;color:#1a1a1a;"><span class="cj">文</span><span class="cj">件</span><span class="cj">名</span></div>
<svg class="a" style="left:477px;top:1397px" width="11" height="7" viewBox="0 0 11 7"><path d="M0 7 L5.5 0 L11 7 Z" fill="#888"/></svg>
<div class="a" style="left:608px;top:1391px;width:1px;height:18px;background:#d0d0d0;"></div>
<div class="a t" style="left:618.5px;top:1393.46px;font-size:16px;line-height:16px;color:#1a1a1a;"><span class="cj">大</span><span class="cj">小</span></div>
<div class="a" style="left:702px;top:1391px;width:1px;height:18px;background:#d0d0d0;"></div>
<div class="a t" style="left:712.5px;top:1393.46px;font-size:16px;line-height:16px;color:#1a1a1a;"><span class="cj">类</span><span class="cj">型</span></div>
<div class="a" style="left:802px;top:1391px;width:1px;height:18px;background:#d0d0d0;"></div>
<div class="a t" style="left:812.5px;top:1393.46px;font-size:16px;line-height:16px;color:#1a1a1a;"><span class="cj">修</span><span class="cj">改</span><span class="cj">时</span><span class="cj">间</span></div>
<div class="a" style="left:971px;top:1391px;width:1px;height:18px;background:#d0d0d0;"></div>
<div class="a t" style="left:981.5px;top:1393.46px;font-size:16px;line-height:16px;color:#1a1a1a;"><span class="cj">权</span><span class="cj">限</span></div>
<div class="a" style="left:1083px;top:1391px;width:1px;height:18px;background:#d0d0d0;"></div>
<div class="a t" style="left:1093.5px;top:1393.46px;font-size:16px;line-height:16px;color:#1a1a1a;"><span class="cj">用</span><span class="cj">户</span>/<span class="cj">用</span><span class="cj">户</span><span class="cj">组</span></div>
<svg class="a" style="left:416px;top:1418px" width="18" height="15" viewBox="0 0 18 15"><path d="M0 0 H6 L7.5 2 H18 V15 H0 Z" fill="#f2b414"/><rect x="0" y="3" width="18" height="12" fill="url(#df)"/></svg>
<div class="a t" style="left:440.6px;top:1416.01px;font-size:17px;line-height:17px;color:#111;">.cache</div>
<div class="a t" style="left:714px;top:1416.86px;font-size:16px;line-height:16px;color:#111;"><span class="cj">文</span><span class="cj">件</span><span class="cj">夹</span></div>
<div class="a t" style="left:815px;top:1416.01px;font-size:17px;line-height:17px;color:#111;">2022/10/12 13:57</div>
<div class="a t" style="left:982.6px;top:1416.01px;font-size:17px;line-height:17px;color:#111;">drwx------</div>
<div class="a t" style="left:1096.3px;top:1416.01px;font-size:17px;line-height:17px;color:#111;">1000/1000</div>
<div class="a" style="left:410px;top:1436px;width:799px;height:22px;background:#f7f7f7;"></div>
<svg class="a" style="left:416px;top:1440px" width="18" height="15" viewBox="0 0 18 15"><path d="M0 0 H6 L7.5 2 H18 V15 H0 Z" fill="#f2b414"/><rect x="0" y="3" width="18" height="12" fill="url(#df)"/></svg>
<div class="a t" style="left:440.6px;top:1438.31px;font-size:17px;line-height:17px;color:#111;">.config</div>
<div class="a t" style="left:714px;top:1439.16px;font-size:16px;line-height:16px;color:#111;"><span class="cj">文</span><span class="cj">件</span><span class="cj">夹</span></div>
<div class="a t" style="left:815px;top:1438.31px;font-size:17px;line-height:17px;color:#111;">2022/10/10 11:58</div>
<div class="a t" style="left:982.6px;top:1438.31px;font-size:17px;line-height:17px;color:#111;">drwxr-xr-x</div>
<div class="a t" style="left:1096.3px;top:1438.31px;font-size:17px;line-height:17px;color:#111;">1000/1000</div>
<svg class="a" style="left:416px;top:1463px" width="18" height="15" viewBox="0 0 18 15"><path d="M0 0 H6 L7.5 2 H18 V15 H0 Z" fill="#f2b414"/><rect x="0" y="3" width="18" height="12" fill="url(#df)"/></svg>
<div class="a t" style="left:440.6px;top:1460.61px;font-size:17px;line-height:17px;color:#111;">.dbus</div>
<div class="a t" style="left:714px;top:1461.46px;font-size:16px;line-height:16px;color:#111;"><span class="cj">文</span><span class="cj">件</span><span class="cj">夹</span></div>
<div class="a t" style="left:815px;top:1460.61px;font-size:17px;line-height:17px;color:#111;">2022/09/29 16:43</div>
<div class="a t" style="left:982.6px;top:1460.61px;font-size:17px;line-height:17px;color:#111;">drwx------</div>
<div class="a t" style="left:1096.3px;top:1460.61px;font-size:17px;line-height:17px;color:#111;">1000/1000</div>
<div class="a" style="left:410px;top:1481px;width:799px;height:22px;background:#f7f7f7;"></div>
<svg class="a" style="left:416px;top:1485px" width="18" height="15" viewBox="0 0 18 15"><path d="M0 0 H6 L7.5 2 H18 V15 H0 Z" fill="#f2b414"/><rect x="0" y="3" width="18" height="12" fill="url(#df)"/></svg>
<div class="a t" style="left:440.6px;top:1482.91px;font-size:17px;line-height:17px;color:#111;">.local</div>
<div class="a t" style="left:714px;top:1483.76px;font-size:16px;line-height:16px;color:#111;"><span class="cj">文</span><span class="cj">件</span><span class="cj">夹</span></div>
<div class="a t" style="left:815px;top:1482.91px;font-size:17px;line-height:17px;color:#111;">2022/09/29 16:43</div>
<div class="a t" style="left:982.6px;top:1482.91px;font-size:17px;line-height:17px;color:#111;">drwx------</div>
<div class="a t" style="left:1096.3px;top:1482.91px;font-size:17px;line-height:17px;color:#111;">1000/1000</div>
<svg class="a" style="left:416px;top:1507px" width="18" height="15" viewBox="0 0 18 15"><path d="M0 0 H6 L7.5 2 H18 V15 H0 Z" fill="#f2b414"/><rect x="0" y="3" width="18" height="12" fill="url(#df)"/></svg>
<div class="a t" style="left:440.6px;top:1505.21px;font-size:17px;line-height:17px;color:#111;">.mozilla</div>
<div class="a t" style="left:714px;top:1506.06px;font-size:16px;line-height:16px;color:#111;"><span class="cj">文</span><span class="cj">件</span><span class="cj">夹</span></div>
<div class="a t" style="left:815px;top:1505.21px;font-size:17px;line-height:17px;color:#111;">2022/09/29 16:31</div>
<div class="a t" style="left:982.6px;top:1505.21px;font-size:17px;line-height:17px;color:#111;">drwx------</div>
<div class="a t" style="left:1096.3px;top:1505.21px;font-size:17px;line-height:17px;color:#111;">1000/1000</div>
<div class="a" style="left:2545px;top:1391px;width:1px;height:18px;background:#a8a8a8;"></div>
<div class="a" style="left:2547px;top:1414px;width:10px;height:31px;background:#dadada;"></div>
<div id="rb" class="a"></div>
<div id="bb" class="a"></div>
</body></html>
